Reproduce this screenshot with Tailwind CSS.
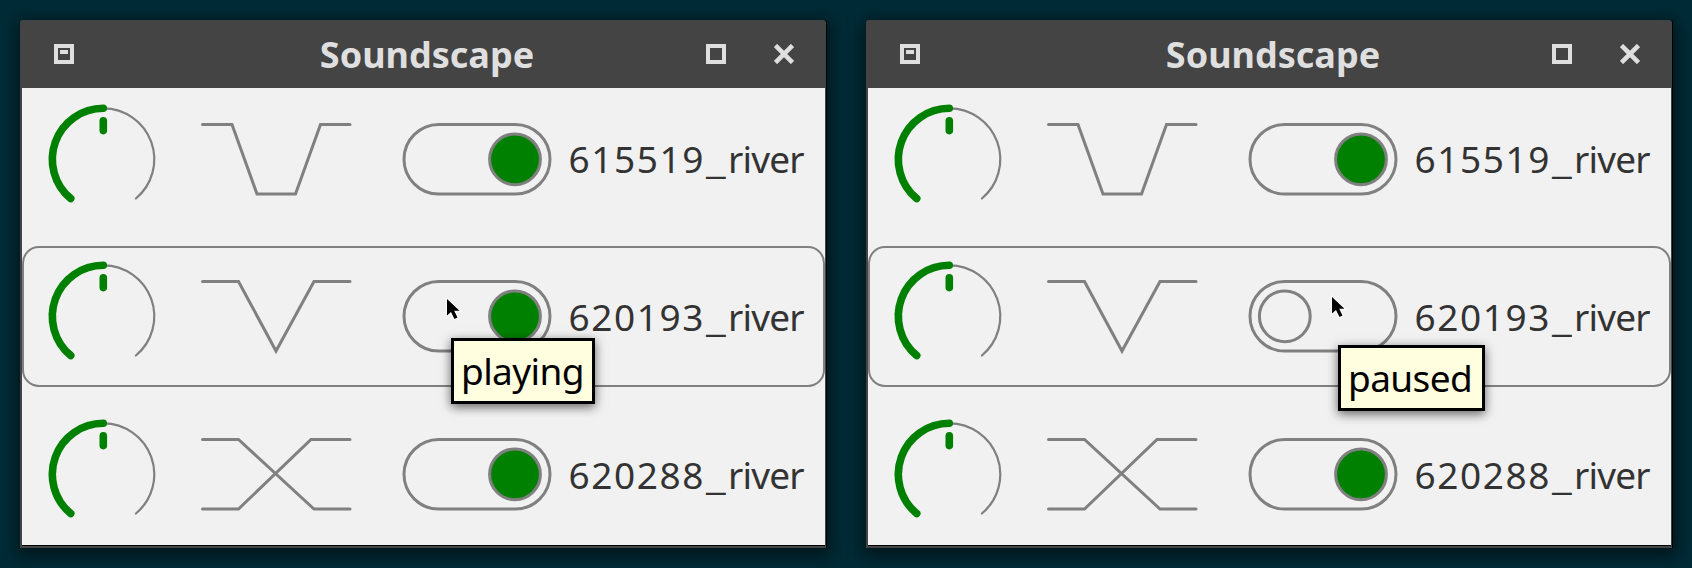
<!DOCTYPE html>
<html lang="en">
<head>
<meta charset="utf-8">
<title>Soundscape</title>
<script src="https://cdn.jsdelivr.net/npm/@tailwindcss/browser@4"></script>
</head>
<body class="h-[568px] w-[1692px] overflow-hidden bg-[#002b36] font-['Noto_Sans',sans-serif]">
<svg class="hidden">
  <symbol id="knob" viewBox="0 0 162 142">
    <path d="M81.3 20.300a51 51 0 0 1 32.6 90.200" fill="none" stroke="#808080" stroke-width="2.2" stroke-linecap="round"/>
    <path d="M48.7 110.500A51 51 0 0 1 81.3 20.300M81.3 32.800v9.8" fill="none" stroke="#008000" stroke-width="7.6" stroke-linecap="round"/>
  </symbol>
  <symbol id="notch" viewBox="0 0 184 142"><path d="M18.500 36.500H48l25 69.500h38.500l25-69.500h29.500" fill="none" stroke="#808080" stroke-width="3" stroke-linecap="round"/></symbol>
  <symbol id="vee" viewBox="0 0 184 142"><path d="M18.500 36.500h36L92 106l38-69.500h36" fill="none" stroke="#808080" stroke-width="3" stroke-linecap="round"/></symbol>
  <symbol id="cross" viewBox="0 0 184 142"><path d="M18.500 36.500h36L130 106h36M18.500 106h36L127 36.500h39" fill="none" stroke="#808080" stroke-width="3" stroke-linecap="round"/></symbol>
  <symbol id="on" viewBox="0 0 200 142">
    <rect x="36" y="36.500" width="146" height="69.500" rx="34.750" fill="none" stroke="#808080" stroke-width="3"/>
    <circle cx="147" cy="71.300" r="25.400" fill="#008000" stroke="#808080" stroke-width="3"/>
  </symbol>
  <symbol id="off" viewBox="0 0 200 142">
    <rect x="36" y="36.500" width="146" height="69.500" rx="34.750" fill="none" stroke="#808080" stroke-width="3"/>
    <circle cx="70.800" cy="71.300" r="25.400" fill="none" stroke="#808080" stroke-width="3"/>
  </symbol>
  <symbol id="pointer" viewBox="0 0 20 28"><path d="M2 2v16.500l4-3.500 3.500 7 3-1.500-3.300-6.800h5.300z" fill="#000" stroke="#fff" stroke-width="2" paint-order="stroke"/></symbol>
  <symbol id="menu" viewBox="0 0 20 20"><path fill-rule="evenodd" fill="#dfdfdf" d="M0 0h20v20H0zM4 4v12h12V4zM6 6h8v4H6z"/></symbol>
  <symbol id="max" viewBox="0 0 20 20"><path d="M2 2h16v16H2z" fill="none" stroke="#dfdfdf" stroke-width="4"/></symbol>
  <symbol id="close" viewBox="0 0 20 20"><path d="M1.500 1.500l17 17M18.500 1.500l-17 17" fill="none" stroke="#dfdfdf" stroke-width="4.600"/></symbol>
</svg>

<main class="flex gap-10 px-5 pt-5">
  <section class="relative h-[528px] w-[806px] shrink-0 rounded-t-[3px] border-b-2 border-l-2 border-[#444] bg-[#444] shadow-[1px_0_0_#000,1px_4px_16px_4px_rgba(0,0,0,0.5)]">
    <header class="flex h-[68px] items-center px-8">
      <svg class="h-5 w-5"><use href="#menu"/></svg>
      <h1 class="flex-1 pt-[2px] pl-[74px] text-center text-[36px] leading-[66px] font-bold text-[#dfdfdf]">Soundscape</h1>
      <svg class="mr-12 h-5 w-5"><use href="#max"/></svg>
      <svg class="h-5 w-5"><use href="#close"/></svg>
    </header>
    <div class="flex h-[458px] w-[803px] flex-col gap-4 border-b border-black bg-[#f1f1f1] text-[37px] text-[#333]">
      <div class="flex h-[141.600px] shrink-0 items-center">
        <svg class="h-[142px] w-[162px] shrink-0"><use href="#knob"/></svg>
        <svg class="h-[142px] w-[184px] shrink-0"><use href="#notch"/></svg>
        <svg class="h-[142px] w-[200px] shrink-0"><use href="#on"/></svg>
        <p class="flex whitespace-nowrap"><span class="w-[138px] pl-[0.500px] tracking-[1.600px]">615519</span><span class="w-[22px]"><span class="inline-block origin-left scale-x-120">_</span></span><span class="tracking-[-0.800px]">river</span></p>
      </div>
      <div class="flex h-[141.600px] shrink-0 items-center rounded-[17px] outline-2 -outline-offset-2 outline-[#808080]">
        <svg class="h-[142px] w-[162px] shrink-0"><use href="#knob"/></svg>
        <svg class="h-[142px] w-[184px] shrink-0"><use href="#vee"/></svg>
        <svg class="h-[142px] w-[200px] shrink-0"><use href="#on"/></svg>
        <p class="flex whitespace-nowrap"><span class="w-[138px] pl-[0.500px] tracking-[1.600px]">620193</span><span class="w-[22px]"><span class="inline-block origin-left scale-x-120">_</span></span><span class="tracking-[-0.800px]">river</span></p>
      </div>
      <div class="flex h-[141.600px] shrink-0 items-center">
        <svg class="h-[142px] w-[162px] shrink-0"><use href="#knob"/></svg>
        <svg class="h-[142px] w-[184px] shrink-0"><use href="#cross"/></svg>
        <svg class="h-[142px] w-[200px] shrink-0"><use href="#on"/></svg>
        <p class="flex whitespace-nowrap pt-px"><span class="w-[138px] pl-[0.500px] tracking-[1.600px]">620288</span><span class="w-[22px]"><span class="inline-block origin-left scale-x-120">_</span></span><span class="tracking-[-0.800px]">river</span></p>
      </div>
    </div>
    <div class="absolute top-[318px] left-[429px] flex h-[66px] w-[144px] items-center border-[3px] border-black bg-[#ffffdf] pl-[7px] text-[37px] tracking-[-0.600px] text-black shadow-[0_3px_10px_rgba(0,0,0,0.6)]">playing</div>
    <svg class="absolute top-[277px] left-[423px] h-7 w-5"><use href="#pointer"/></svg>
  </section>

  <section class="relative h-[528px] w-[806px] shrink-0 rounded-t-[3px] border-b-2 border-l-2 border-[#444] bg-[#444] shadow-[1px_0_0_#000,1px_4px_16px_4px_rgba(0,0,0,0.5)]">
    <header class="flex h-[68px] items-center px-8">
      <svg class="h-5 w-5"><use href="#menu"/></svg>
      <h1 class="flex-1 pt-[2px] pl-[74px] text-center text-[36px] leading-[66px] font-bold text-[#dfdfdf]">Soundscape</h1>
      <svg class="mr-12 h-5 w-5"><use href="#max"/></svg>
      <svg class="h-5 w-5"><use href="#close"/></svg>
    </header>
    <div class="flex h-[458px] w-[803px] flex-col gap-4 border-b border-black bg-[#f1f1f1] text-[37px] text-[#333]">
      <div class="flex h-[141.600px] shrink-0 items-center">
        <svg class="h-[142px] w-[162px] shrink-0"><use href="#knob"/></svg>
        <svg class="h-[142px] w-[184px] shrink-0"><use href="#notch"/></svg>
        <svg class="h-[142px] w-[200px] shrink-0"><use href="#on"/></svg>
        <p class="flex whitespace-nowrap"><span class="w-[138px] pl-[0.500px] tracking-[1.600px]">615519</span><span class="w-[22px]"><span class="inline-block origin-left scale-x-120">_</span></span><span class="tracking-[-0.800px]">river</span></p>
      </div>
      <div class="flex h-[141.600px] shrink-0 items-center rounded-[17px] outline-2 -outline-offset-2 outline-[#808080]">
        <svg class="h-[142px] w-[162px] shrink-0"><use href="#knob"/></svg>
        <svg class="h-[142px] w-[184px] shrink-0"><use href="#vee"/></svg>
        <svg class="h-[142px] w-[200px] shrink-0"><use href="#off"/></svg>
        <p class="flex whitespace-nowrap"><span class="w-[138px] pl-[0.500px] tracking-[1.600px]">620193</span><span class="w-[22px]"><span class="inline-block origin-left scale-x-120">_</span></span><span class="tracking-[-0.800px]">river</span></p>
      </div>
      <div class="flex h-[141.600px] shrink-0 items-center">
        <svg class="h-[142px] w-[162px] shrink-0"><use href="#knob"/></svg>
        <svg class="h-[142px] w-[184px] shrink-0"><use href="#cross"/></svg>
        <svg class="h-[142px] w-[200px] shrink-0"><use href="#on"/></svg>
        <p class="flex whitespace-nowrap pt-px"><span class="w-[138px] pl-[0.500px] tracking-[1.600px]">620288</span><span class="w-[22px]"><span class="inline-block origin-left scale-x-120">_</span></span><span class="tracking-[-0.800px]">river</span></p>
      </div>
    </div>
    <div class="absolute top-[325px] left-[470px] flex h-[66px] w-[147px] items-center border-[3px] border-black bg-[#ffffdf] pl-[7px] text-[37px] tracking-[-0.600px] text-black shadow-[0_3px_10px_rgba(0,0,0,0.6)]">paused</div>
    <svg class="absolute top-[275px] left-[462px] h-7 w-5"><use href="#pointer"/></svg>
  </section>
</main>
</body>
</html>
